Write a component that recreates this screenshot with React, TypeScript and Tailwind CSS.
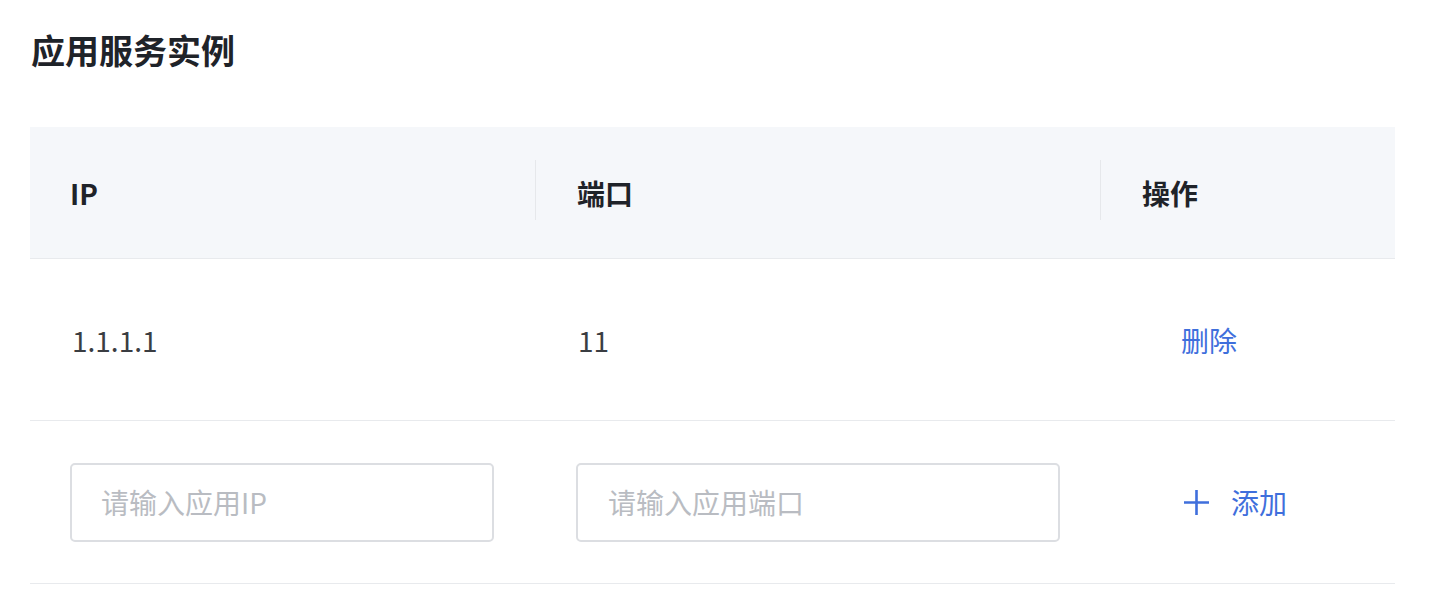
import React, { useState } from 'react';

interface Instance {
  id: number;
  ip: string;
  port: string;
}

const font = { fontFamily: '"Noto Sans CJK SC", "Noto Sans", sans-serif' };

const Divider: React.FC = () => <div className="absolute left-0 top-[33px] h-[60px] w-px bg-[#e6e8eb]" />;

const App: React.FC = () => {
  const [instances, setInstances] = useState<Instance[]>([{ id: 1, ip: '1.1.1.1', port: '11' }]);
  const [ip, setIp] = useState('');
  const [port, setPort] = useState('');

  const handleAdd = () => {
    if (!ip || !port) return;
    setInstances(prev => [...prev, { id: Date.now(), ip, port }]);
    setIp('');
    setPort('');
  };

  const handleDelete = (id: number) => {
    setInstances(prev => prev.filter(item => item.id !== id));
  };

  return (
    <div className="min-h-[601px] w-[1439px] bg-white" style={font}>
      <div className="flex h-[100px] items-center pl-[31px]">
        <h2 className="text-[34px] font-bold leading-none text-[#1f2329]">应用服务实例</h2>
      </div>

      <div className="ml-[30px] mt-[27px] w-[1365px]">
        {/* header */}
        <div className="grid h-[132px] grid-cols-[505px_565px_1fr] border-b border-[#e8eaed] bg-[#f5f7fa] text-[28px] font-bold text-[#1f2329]">
          <div className="flex items-center pl-[40px]">IP</div>
          <div className="relative flex items-center pl-[42px]">
            <Divider />
            端口
          </div>
          <div className="relative flex items-center pl-[42px]">
            <Divider />
            操作
          </div>
        </div>

        {instances.map(item => (
          <div
            key={item.id}
            className="grid h-[162px] grid-cols-[505px_565px_1fr] border-b border-[#e8eaed] text-[28px] text-[#3a3d42]"
          >
            <div className="flex items-center pl-[42px]">{item.ip}</div>
            <div className="flex items-center pl-[43px]">{item.port}</div>
            <div className="flex items-center pl-[81px]">
              <button className="text-[#3f6fdc]" onClick={() => handleDelete(item.id)}>
                删除
              </button>
            </div>
          </div>
        ))}

        {/* add row */}
        <div className="grid h-[163px] grid-cols-[505px_565px_1fr] border-b border-[#e8eaed] text-[28px]">
          <div className="flex items-center pl-[40px]">
            <input
              value={ip}
              onChange={e => setIp(e.target.value)}
              placeholder="请输入应用IP"
              className="h-[79px] w-[424px] rounded-[5px] border-2 border-[#dcdee2] pl-[29px] text-[#333] outline-none placeholder:text-[#b9bcc2]"
            />
          </div>
          <div className="flex items-center pl-[41px]">
            <input
              value={port}
              onChange={e => setPort(e.target.value)}
              placeholder="请输入应用端口"
              className="h-[79px] w-[484px] rounded-[5px] border-2 border-[#dcdee2] pl-[30px] text-[#333] outline-none placeholder:text-[#b9bcc2]"
            />
          </div>
          <div className="flex items-center pl-[83px]">
            <button className="flex items-center gap-[21px] text-[#3f6fdc]" onClick={handleAdd}>
              <svg width="27" height="27" viewBox="0 0 27 27" fill="none" stroke="currentColor" strokeWidth="2.6">
                <path d="M13.5 1v25M1 13.5h25" />
              </svg>
              添加
            </button>
          </div>
        </div>
      </div>
    </div>
  );
};

export default App;
